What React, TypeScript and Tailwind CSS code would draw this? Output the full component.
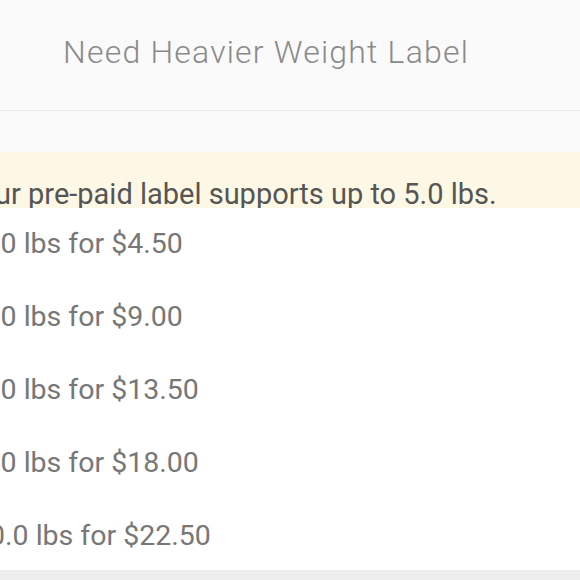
const rows = [
  { text: '10.0 lbs for $4.50', shift: -39 },
  { text: '15.0 lbs for $9.00', shift: -39 },
  { text: '20.0 lbs for $13.50', shift: -39 },
  { text: '25.0 lbs for $18.00', shift: -39 },
  { text: '30.0 lbs for $22.50', shift: -27 },
];

export default function App() {
  return (
    <div className="w-[580px] h-[580px] overflow-hidden bg-[#eeeeee] font-['Roboto',sans-serif]">
      <div className="h-[110px] bg-[#fafafa] flex items-center pl-[63px] pb-[6px]">
        <h1 className="text-[32px] leading-none text-[#8a8a8a] font-light tracking-[1.2px]">Need Heavier Weight Label</h1>
      </div>
      <div className="h-px bg-[#ebebeb]" />
      <div className="h-[41px] bg-[#fafafa]" />
      <div className="h-[56px] bg-[#fdf8e6] flex items-end overflow-hidden">
        <p className="text-[29px] leading-[36px] text-[#555555] whitespace-nowrap -ml-[38px] -mb-[4px]">
          Your pre-paid label supports up to 5.0 lbs.
        </p>
      </div>
      <div className="h-[362px] bg-white flex flex-col">
        {rows.map(r => (
          <div key={r.text} className="h-[73px] shrink-0 flex items-center overflow-hidden">
            <span className="text-[28.5px] text-[#777777] whitespace-nowrap" style={{ marginLeft: r.shift }}>
              {r.text}
            </span>
          </div>
        ))}
      </div>
    </div>
  );
}
